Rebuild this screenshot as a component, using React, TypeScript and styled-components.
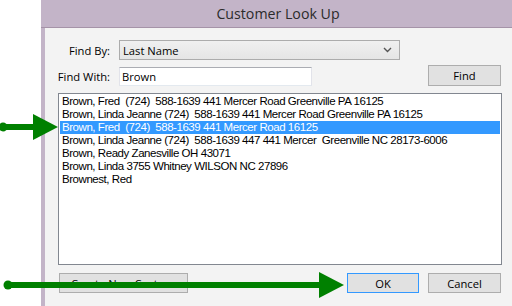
import React from 'react'
import styled, { createGlobalStyle } from 'styled-components'

const GlobalStyle = createGlobalStyle`
  html, body {
    margin: 0;
    padding: 0;
    background: #ffffff;
    overflow: hidden;
  }
  body {
    font-family: 'Open Sans', 'Noto Sans', sans-serif;
  }
`

const customers = [
  'Brown, Fred  (724)  588-1639 441 Mercer Road Greenville PA 16125',
  'Brown, Linda Jeanne (724)  588-1639 441 Mercer Road Greenville PA 16125',
  'Brown, Fred  (724)  588-1639 441 Mercer Road 16125',
  'Brown, Linda Jeanne (724)  588-1639 447 441 Mercer  Greenville NC 28173-6006',
  'Brown, Ready Zanesville OH 43071',
  'Brown, Linda 3755 Whitney WILSON NC 27896',
  'Brownest, Red',
]

type ArrowProps = {
  left: number
  top: number
  length: number
}

// green annotation arrow: dot, shaft, triangular head
function Arrow({ left, top, length }: ArrowProps) {
  const h = 26
  const mid = h / 2
  return (
    <ArrowSvg
      style={{ left, top }}
      width={length}
      height={h}
      viewBox={`0 0 ${length} ${h}`}
    >
      <circle cx={5} cy={mid} r={4.5} fill="#008000" />
      <rect x={5} y={mid - 3} width={length - 24} height={6} fill="#008000" />
      <polygon
        points={`${length - 25},0 ${length},${mid} ${length - 25},${h}`}
        fill="#008000"
      />
    </ArrowSvg>
  )
}

export default function App() {
  return (
    <>
      <GlobalStyle />
      <Page>
        <Gutter />
        <Window>
          <TitleBar>Customer Look Up</TitleBar>
          <Client>
            <FieldRow>
              <Label>Find By:</Label>
              <Combo>
                <span>Last Name</span>
                <svg width="9" height="6" viewBox="0 0 9 6">
                  <path d="M1 1 L4.5 4.5 L8 1" stroke="#555" strokeWidth="1.4" fill="none" />
                </svg>
              </Combo>
            </FieldRow>
            <FieldRow $top={5} $align="flex-end">
              <Label $bottom={2}>Find With:</Label>
              <TextBox>Brown</TextBox>
              <Button $width={73} $left={116} $height={21}>
                Find
              </Button>
            </FieldRow>
            <ListBox>
              {customers.map((c, i) => (
                <ListItem key={i} $selected={i === 2}>
                  {c}
                </ListItem>
              ))}
            </ListBox>
            <ButtonRow>
              <Button $width={129} $left={14} $align="left">
                Create New Customer
              </Button>
              <Button $width={72} $left={159} $primary>
                OK
              </Button>
              <Button $width={73} $left={9}>
                Cancel
              </Button>
            </ButtonRow>
          </Client>
        </Window>
        <Arrow left={-2} top={114} length={60} />
        <Arrow left={3} top={272} length={341} />
      </Page>
    </>
  )
}

const Page = styled.div`
  position: relative;
  display: flex;
  width: 512px;
  height: 306px;
  overflow: hidden;
`
const Gutter = styled.div`
  width: 41px;
  flex-shrink: 0;
  background: #ffffff;
`
const Window = styled.div`
  width: 474px;
  flex-shrink: 0;
  display: flex;
  flex-direction: column;
  background: #c3b4c8;
`
const TitleBar = styled.div`
  height: 28px;
  line-height: 27px;
  text-align: center;
  font-size: 14.2px;
  color: #2b2b2b;
  border-bottom: 1px solid #a593a8;
  box-sizing: border-box;
`
const Client = styled.div`
  flex: 1;
  margin-left: 4px;
  background: #f3f3f3;
  display: flex;
  flex-direction: column;
  font-size: 11.2px;
  color: #000;
`
const FieldRow = styled.div<{ $top?: number; $align?: string }>`
  display: flex;
  align-items: ${(p) => p.$align || 'center'};
  margin-top: ${(p) => p.$top ?? 12}px;
`
const Label = styled.div<{ $bottom?: number }>`
  width: 65px;
  margin-right: 9px;
  text-align: right;
  white-space: nowrap;
  margin-bottom: ${(p) => p.$bottom ?? 0}px;
`
const Combo = styled.div`
  width: 281px;
  height: 20px;
  box-sizing: border-box;
  border: 1px solid #acacac;
  background: linear-gradient(#f0f0f0, #e5e5e5);
  display: flex;
  align-items: center;
  justify-content: space-between;
  padding: 0 7px 0 3px;
`
const TextBox = styled.div`
  width: 193px;
  height: 19px;
  box-sizing: border-box;
  border: 1px solid #abadb3;
  border-color: #abadb3 #e2e3ea #e3e9ef #e2e3ea;
  background: #ffffff;
  padding-left: 2px;
  line-height: 17px;
`
const Button = styled.div<{
  $width: number
  $left: number
  $height?: number
  $primary?: boolean
  $align?: string
}>`
  width: ${(p) => p.$width}px;
  height: ${(p) => p.$height ?? 20}px;
  margin-left: ${(p) => p.$left}px;
  box-sizing: border-box;
  border: 1px solid ${(p) => (p.$primary ? '#3399ff' : '#adadad')};
  background: #e1e1e1;
  display: flex;
  align-items: center;
  justify-content: ${(p) => (p.$align === 'left' ? 'flex-start' : 'center')};
  padding-left: ${(p) => (p.$align === 'left' ? 11 : 0)}px;
  white-space: nowrap;
  flex-shrink: 0;
`
const ListBox = styled.div`
  margin: 7px 0 0 13px;
  width: 444px;
  height: 172px;
  box-sizing: border-box;
  border: 1px solid #828790;
  background: #ffffff;
  padding: 1px 1px;
  font-family: 'Liberation Sans', Arial, sans-serif;
  font-size: 11.5px;
  letter-spacing: -0.45px;
`
const ListItem = styled.div<{ $selected?: boolean }>`
  height: 13px;
  line-height: 13px;
  padding-left: 2px;
  white-space: pre;
  background: ${(p) => (p.$selected ? '#3399ff' : 'transparent')};
  color: ${(p) => (p.$selected ? '#ffffff' : '#000000')};
`
const ButtonRow = styled.div`
  display: flex;
  margin-top: 8px;
`
const ArrowSvg = styled.svg`
  position: absolute;
  pointer-events: none;
`
